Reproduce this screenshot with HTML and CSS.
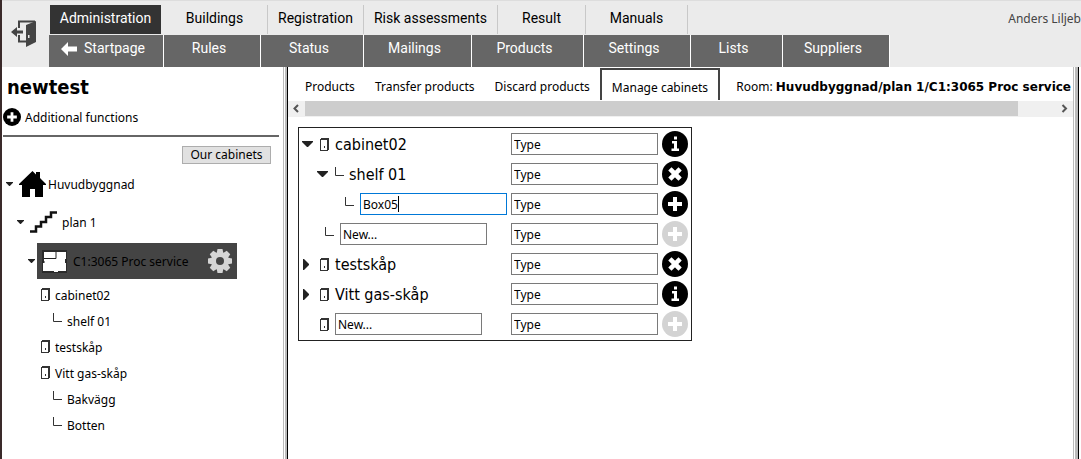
FILE: index.html
```
<!DOCTYPE html>
<html lang="en">
<head>
  <meta charset="UTF-8">
  <meta name="viewport" content="width=device-width, initial-scale=1.0">
  <title>Manage cabinets</title>
  <link rel="stylesheet" href="styles.css">
</head>
<body>

  <!-- Shared icons -->
  <svg class="sprite" aria-hidden="true">
    <symbol id="door" viewBox="0 0 9 13"><path d="M1 1.5h7.5M.5 1v11M0 12.5h8M7.5 2v11M8.5 0v12M1 .5h8" fill="none" stroke="#333"/><path d="M4 8h1v2H4z" fill="#333"/></symbol>
    <symbol id="branch" viewBox="0 0 9 10"><path d="M.5 0v8.5H9" fill="none" stroke="#333"/></symbol>
    <symbol id="down" viewBox="0 0 11 6"><path d="M0 0h11v1L6 6H5L0 1z" fill="#222"/></symbol>
    <symbol id="right" viewBox="0 0 6 11"><path d="M0 0h1l5 5v1l-5 5H0z" fill="#222"/></symbol>
    <symbol id="plus" viewBox="0 0 26 26"><circle cx="13" cy="13" r="13"/><path d="M11 6h4v5h5v4h-5v5h-4v-5H6v-4h5z" fill="#fff"/></symbol>
    <symbol id="cross" viewBox="0 0 26 26"><circle cx="13" cy="13" r="13"/><path d="M9.500 9.500l7 7M16.500 9.500l-7 7" stroke="#fff" stroke-width="4.600" stroke-linecap="square"/></symbol>
    <symbol id="info" viewBox="0 0 26 26"><circle cx="13" cy="13" r="13"/><path d="M12 5.500h3v3h-3zM10 10h5v7.500h2V20H9.500v-2.500H12v-5h-2z" fill="#fff"/></symbol>
  </svg>

  <header class="header">
    <a class="exit" href="#" aria-label="Log out">
      <svg width="26" height="28" viewBox="0 0 26 28"><path d="M8 8V1.500h16M8 15v6.500h7" fill="none" stroke="#444" stroke-width="2"/><path d="M15 5l10-4v21l-10 5z" fill="#444"/><path d="M17 15h1.500v3H17z" fill="#ebebeb"/><path d="M0 12l6-5v3.500h6v3H6V17z" fill="#444"/></svg>
    </a>
    <nav class="menus">
      <div class="menu">
        <a class="active" href="#">Administration</a>
        <a href="#">Buildings</a>
        <a href="#">Registration</a>
        <a href="#">Risk assessments</a>
        <a href="#">Result</a>
        <a href="#">Manuals</a>
      </div>
      <div class="submenu">
        <a href="#"><svg class="back" width="16" height="14" viewBox="0 0 16 14"><path d="M0 7l7-7v4.500h9v5H7V14z" fill="#fff"/></svg>Startpage</a>
        <a href="#">Rules</a>
        <a href="#">Status</a>
        <a href="#">Mailings</a>
        <a href="#">Products</a>
        <a href="#">Settings</a>
        <a href="#">Lists</a>
        <a href="#">Suppliers</a>
      </div>
    </nav>
    <div class="user">Anders Liljeb</div>
  </header>

  <div class="frames">
    <aside class="sidebar">
      <h1>newtest</h1>
      <a class="functions" href="#"><svg width="18" height="18"><use href="#plus"/></svg>Additional functions</a>
      <hr>
      <div class="tools"><button type="button">Our cabinets</button></div>

      <div class="node building">
        <svg width="7" height="4"><use href="#down"/></svg>
        <svg width="27" height="26" viewBox="0 0 27 26"><path d="M0 13L13.500 0 17 3.500V1h4v6l6 6v1h-3v12h-8v-8h-5v8H3V14H0z"/></svg>
        <a href="#">Huvudbyggnad</a>
      </div>
      <div class="node floor">
        <svg width="7" height="4"><use href="#down"/></svg>
        <svg width="27" height="22" viewBox="0 0 27 22"><path d="M0 20.500h6v-5h5v-4.500h5v-5h5v-4.500h6" fill="none" stroke="#111" stroke-width="2.500"/></svg>
        <a href="#">plan 1</a>
      </div>
      <div class="node room">
        <svg width="7" height="4"><use href="#down"/></svg>
        <div class="selected">
          <svg width="25" height="23" viewBox="0 0 25 23"><path d="M0 0h25v23H0z" fill="#2b2b2b"/><path d="M2 2h22v7h-1v4h1v8h-8v1h-4v-1H1v-8h1z" fill="#fff"/><path d="M2 8.500h12V2M0 12h3" fill="none" stroke="#222"/></svg>
          <a href="#">C1:3065 Proc service</a>
          <button class="gear" type="button" aria-label="Settings">
            <svg width="24" height="24" viewBox="0 0 24 24"><g fill="#d5d5d5"><circle cx="12" cy="12" r="9"/><path id="tooth" d="M9.500 0h5l1 5h-7zM9.500 24h5l1-5h-7z"/><use href="#tooth" transform="rotate(45 12 12)"/><use href="#tooth" transform="rotate(90 12 12)"/><use href="#tooth" transform="rotate(135 12 12)"/></g><circle cx="12" cy="12" r="4" fill="#444"/></svg>
          </button>
        </div>
      </div>

      <ul class="cabinets">
        <li><svg width="9" height="13"><use href="#door"/></svg><a href="#">cabinet02</a></li>
        <li class="shelf"><svg width="9" height="10"><use href="#branch"/></svg><a href="#">shelf 01</a></li>
        <li><svg width="9" height="13"><use href="#door"/></svg><a href="#">testskåp</a></li>
        <li><svg width="9" height="13"><use href="#door"/></svg><a href="#">Vitt gas-skåp</a></li>
        <li class="shelf"><svg width="9" height="10"><use href="#branch"/></svg><a href="#">Bakvägg</a></li>
        <li class="shelf"><svg width="9" height="10"><use href="#branch"/></svg><a href="#">Botten</a></li>
      </ul>
    </aside>

    <main class="main">
      <nav class="tabs">
        <a href="#">Products</a>
        <a href="#">Transfer products</a>
        <a href="#">Discard products</a>
        <a class="current" href="#">Manage cabinets</a>
        <span class="location">Room: <b>Huvudbyggnad/plan 1/C1:3065 Proc service</b></span>
      </nav>
      <div class="scrollbar">
        <svg width="17" height="16" viewBox="0 0 17 16"><path d="M10 4L6.500 7.500 10 11" fill="none" stroke="#555" stroke-width="2"/></svg>
        <div class="track"><div class="thumb"></div></div>
        <svg width="17" height="16" viewBox="0 0 17 16"><path d="M6.500 4L10 7.500 6.500 11" fill="none" stroke="#555" stroke-width="2"/></svg>
      </div>

      <form class="editor">
        <div class="row">
          <div class="name">
            <span class="toggle"><svg width="11" height="6"><use href="#down"/></svg></span>
            <svg width="9" height="13"><use href="#door"/></svg>
            <span>cabinet02</span>
          </div>
          <input type="text" value="Type" aria-label="Type of cabinet02">
          <button type="button" aria-label="Info"><svg width="26" height="26"><use href="#info"/></svg></button>
        </div>
        <div class="row">
          <div class="name level-1">
            <span class="toggle"><svg width="11" height="6"><use href="#down"/></svg></span>
            <svg class="branch" width="9" height="10"><use href="#branch"/></svg>
            <span>shelf 01</span>
          </div>
          <input type="text" value="Type" aria-label="Type of shelf 01">
          <button type="button" aria-label="Delete"><svg width="26" height="26"><use href="#cross"/></svg></button>
        </div>
        <div class="row">
          <div class="name level-2">
            <span class="toggle"></span>
            <svg class="branch" width="9" height="10"><use href="#branch"/></svg>
            <span class="editing"><input id="boxName" type="text" value="Box05" aria-label="Box name"></span>
          </div>
          <input type="text" value="Type" aria-label="Type of Box05">
          <button type="button" aria-label="Add"><svg width="26" height="26"><use href="#plus"/></svg></button>
        </div>
        <div class="row">
          <div class="name new-shelf">
            <span class="toggle"></span>
            <svg class="branch" width="9" height="10"><use href="#branch"/></svg>
            <input type="text" value="New..." aria-label="New shelf">
          </div>
          <input type="text" value="Type" aria-label="Type of new shelf">
          <button class="muted" type="button" aria-label="Add"><svg width="26" height="26"><use href="#plus"/></svg></button>
        </div>
        <div class="row">
          <div class="name">
            <span class="toggle closed"><svg width="6" height="11"><use href="#right"/></svg></span>
            <svg width="9" height="13"><use href="#door"/></svg>
            <span>testskåp</span>
          </div>
          <input type="text" value="Type" aria-label="Type of testskåp">
          <button type="button" aria-label="Delete"><svg width="26" height="26"><use href="#cross"/></svg></button>
        </div>
        <div class="row">
          <div class="name">
            <span class="toggle closed"><svg width="6" height="11"><use href="#right"/></svg></span>
            <svg width="9" height="13"><use href="#door"/></svg>
            <span>Vitt gas-skåp</span>
          </div>
          <input type="text" value="Type" aria-label="Type of Vitt gas-skåp">
          <button type="button" aria-label="Info"><svg width="26" height="26"><use href="#info"/></svg></button>
        </div>
        <div class="row">
          <div class="name">
            <span class="toggle"></span>
            <svg width="9" height="13"><use href="#door"/></svg>
            <input type="text" value="New..." aria-label="New cabinet">
          </div>
          <input type="text" value="Type" aria-label="Type of new cabinet">
          <button class="muted" type="button" aria-label="Add"><svg width="26" height="26"><use href="#plus"/></svg></button>
        </div>
      </form>
    </main>
  </div>

  <script>
    document.getElementById('boxName').focus();
  </script>

</body>
</html>
```
FILE: styles.css
```
* {
  box-sizing: border-box;
}

body {
  margin: 0;
  min-height: 100vh;
  display: flex;
  flex-direction: column;
  overflow: hidden;
  border-left: 2px solid #3a2a2a;
  background-color: #fff;
  color: #000;
  font-family: Tahoma, "Noto Sans", sans-serif;
  font-size: 12px;
}

a {
  color: inherit;
  text-decoration: none;
}

svg {
  display: block;
  flex: none;
}

.sprite {
  position: absolute;
  width: 0;
  height: 0;
}

button,
input {
  font: inherit;
  color: inherit;
}

/* Header */
.header {
  display: flex;
  height: 67px;
  border-top: 1px solid #ddd;
  background-color: #ebebeb;
}

.exit {
  width: 47px;
  padding: 19px 0 0 9px;
}

.menus {
  padding-top: 4px;
  font-family: Roboto, sans-serif;
  font-size: 14px;
}

.menu,
.submenu {
  display: grid;
  text-align: center;
}

.menu {
  grid-template-columns: 113px 106px 96px 134px 88px 102px;
  height: 30px;
  line-height: 27px;
}

.menu a {
  height: 29px;
  border-right: 1px solid #c8c8c8;
}

.menu .active {
  margin: 0 1px;
  border: none;
  background-color: #333;
  color: #fff;
}

.submenu {
  grid-template-columns: 115px 97px 103px 108px 112px 107px 92px 107px;
  height: 32px;
  line-height: 27px;
  color: #fff;
}

.submenu a {
  display: flex;
  justify-content: center;
  padding-right: 6px;
  border-right: 1px solid #fff;
  background-color: #666;
}

.back {
  margin: 7px 7px 0 0;
}

.user {
  margin-left: auto;
  padding-top: 9px;
  color: #444;
  white-space: nowrap;
}

/* Frames */
.frames {
  display: flex;
  flex: 1;
}

.sidebar {
  flex: none;
  width: 286px;
  border-right: 1px solid #000;
  box-shadow: inset -2px 0 #bbb, inset -3px 0 #fff, inset -4px 0 #bbb;
}

.sidebar h1 {
  margin: 0;
  padding: 8px 5px 0;
  font-family: Tahoma, "DejaVu Sans Condensed", sans-serif;
  font-size: 20px;
  line-height: 24px;
}

.functions {
  display: flex;
  align-items: center;
  gap: 4px;
  height: 18px;
  margin: 9px 0 0 1px;
}

.sidebar hr {
  height: 2px;
  margin: 9px 8px 0 1px;
  border: none;
  background-color: #666;
}

.tools {
  display: flex;
  justify-content: flex-end;
  padding: 9px 16px 1px 0;
}

.tools button {
  height: 18px;
  width: 89px;
  padding: 0;
  border: 1px solid #adadad;
  background-color: #e1e1e1;
  line-height: 16px;
}

.node {
  display: flex;
  align-items: center;
  height: 38px;
}

.building {
  padding-left: 4px;
}

.building a {
  padding-left: 2px;
}

.building svg + svg {
  margin-left: 6px;
}

.floor {
  padding-left: 15px;
}

.floor a {
  padding-left: 5px;
}

.floor svg + svg {
  margin-left: 6px;
}

.room {
  height: 40px;
  padding-left: 26px;
}

.selected {
  display: flex;
  align-items: center;
  gap: 6px;
  width: 200px;
  height: 36px;
  margin-left: 2px;
  padding: 0 5px;
  background-color: #444;
  white-space: nowrap;
}

.gear {
  margin-left: auto;
  padding: 0;
  border: none;
  background: none;
}

.cabinets {
  margin: 0;
  padding: 0;
  list-style: none;
}

.cabinets li {
  display: flex;
  align-items: center;
  gap: 5px;
  height: 26px;
  padding-left: 39px;
}

.cabinets a {
  padding-top: 2px;
}

.cabinets .shelf {
  padding-left: 51px;
}

.cabinets .shelf svg {
  margin-bottom: 4px;
}

/* Main frame */
.main {
  flex: 1;
  min-width: 0;
  margin-right: 2px;
  padding-right: 5px;
  border-right: 1px solid #000;
  box-shadow: inset -3px 0 #bbb, inset -4px 0 #fff, inset -5px 0 #bbb;
}

.tabs {
  display: flex;
  align-items: center;
  height: 34px;
  padding: 6px 2px 0 17px;
  line-height: 16px;
  white-space: nowrap;
}

.tabs a {
  margin-right: 20px;
}

.tabs .current {
  align-self: flex-end;
  height: 32px;
  margin: 0 0 1px -10px;
  padding: 10px 10px 0;
  border: 2px solid #444;
  border-bottom: none;
}

.location {
  margin-left: auto;
}

.location b {
  font-family: Tahoma, "DejaVu Sans", sans-serif;
}

.scrollbar {
  display: flex;
  height: 16px;
  background-color: #f0f0f0;
}

.track {
  flex: 1;
}

.thumb {
  width: 95%;
  height: 15px;
  background-color: #cdcdcd;
}

/* Cabinet editor */
.editor {
  width: 394px;
  margin: 10px;
  padding: 1px 0;
  border: 1px solid #222;
}

.row {
  display: flex;
  align-items: center;
  height: 30px;
}

.row input {
  display: block;
  width: 147px;
  height: 22px;
  padding: 0 2px;
  border: 1px solid #7a7a7a;
  outline: none;
  background-color: #fff;
}

.row input:focus {
  border-color: #0078d7;
  caret-color: transparent;
}

.row button {
  margin-left: 4px;
  padding: 0;
  border: none;
  background: none;
}

.row .muted {
  fill: #d3d3d3;
}

.name {
  display: flex;
  align-items: center;
  width: 212px;
  padding-left: 3px;
  font-family: Tahoma, "DejaVu Sans Condensed", sans-serif;
  font-size: 16px;
}

.row .name input {
  font-family: Tahoma, "Noto Sans", sans-serif;
  font-size: 12px;
}

.name > svg {
  margin-right: 6px;
}

.name .branch {
  margin-right: 5px;
  margin-bottom: 5px;
}

.name .branch + .editing,
.name .branch + input {
  margin-left: 1px;
}

.editing {
  position: relative;
}

/* Steady text caret */
.editing::after {
  content: "";
  position: absolute;
  top: 3px;
  left: 38px;
  width: 1px;
  height: 16px;
  background-color: #000;
}

.toggle {
  display: flex;
  justify-content: center;
  width: 11px;
  margin-right: 7px;
}

.closed {
  justify-content: flex-start;
  padding-left: 1px;
}

.level-1 {
  padding-left: 18px;
}

.level-2 {
  padding-left: 28px;
}

.new-shelf {
  padding-left: 8px;
}
```
